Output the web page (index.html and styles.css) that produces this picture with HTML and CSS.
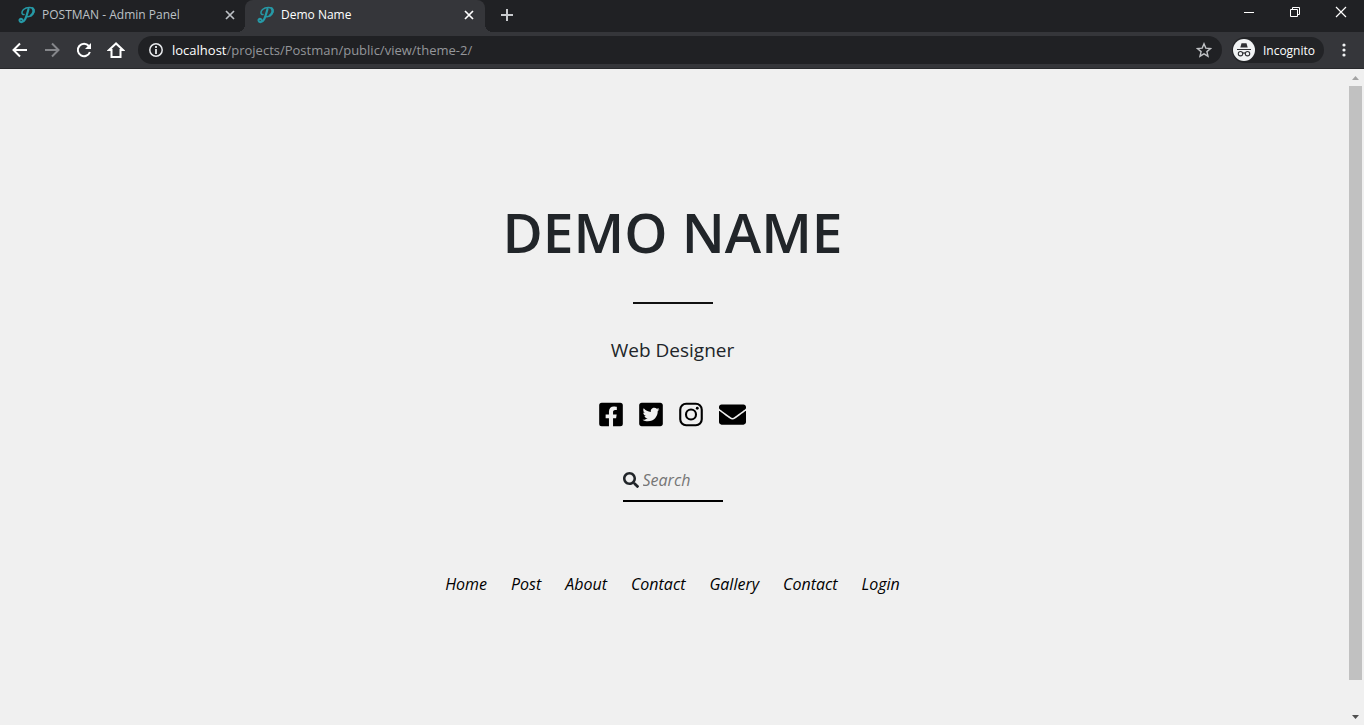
FILE: index.html
```html
<!DOCTYPE html>
<html lang="en">
<head>
<meta charset="utf-8">
<title>Demo Name</title>
<link rel="stylesheet" href="styles.css">
</head>
<body>
<svg class="defs" aria-hidden="true">
  <symbol id="logo" viewBox="0 0 18 18">
    <g fill="none" stroke="#2699a6" stroke-linecap="round">
      <path stroke-width="2.2" d="M10.500 3C9.500 6.500 8.500 11 7 13.500C5.300 16.500 2.200 16.800 1.600 14.800C1.200 13 3 12.300 4.200 13.500"/>
      <path stroke-width="1.500" d="M6 8.500C3.500 8.800 3.200 5.800 5.500 3.500C8.500 1 14.500 .6 16 3.500C17 6.500 14 11 9.500 10.700"/>
      <path stroke-width="2.200" d="M14.600 2.500C16.300 4.500 15.300 7.500 13 9.300"/>
    </g>
  </symbol>
  <symbol id="close" viewBox="0 0 10 10"><path d="M1 1l8 8M9 1l-8 8" fill="none" stroke="currentColor" stroke-width="1.700"/></symbol>
</svg>

<header class="browser">
  <div class="tabstrip">
    <div class="tab">
      <svg class="favicon"><use href="#logo"/></svg>
      <span class="tab-title">POSTMAN - Admin Panel</span>
      <button class="tab-close" aria-label="Close POSTMAN - Admin Panel"><svg width="10" height="10"><use href="#close"/></svg></button>
    </div>
    <div class="tab tab-active">
      <svg class="favicon"><use href="#logo"/></svg>
      <span class="tab-title">Demo Name</span>
      <button class="tab-close" aria-label="Close Demo Name"><svg width="10" height="10"><use href="#close"/></svg></button>
    </div>
    <button class="new-tab" aria-label="New tab"><svg width="12" height="12" viewBox="0 0 12 12"><path d="M6 0v12M0 6h12" stroke="#c8cacd" stroke-width="2"/></svg></button>
    <div class="window-controls">
      <button aria-label="Minimize"><svg width="12" height="12" viewBox="0 0 12 12"><path d="M1 6.500h10" stroke="#fff"/></svg></button>
      <button aria-label="Restore"><svg width="12" height="12" viewBox="0 0 12 12"><path d="M1.500 3.500h7v7h-7zM3.500 3.500v-2h7v7h-2" fill="none" stroke="#fff"/></svg></button>
      <button aria-label="Close window"><svg width="12" height="12" viewBox="0 0 12 12"><path d="M1 1l10 10M11 1L1 11" stroke="#fff" stroke-width="1.200"/></svg></button>
    </div>
  </div>
  <div class="toolbar">
    <nav class="nav-buttons" aria-label="Browser navigation">
      <button aria-label="Back"><svg width="16" height="16" viewBox="0 0 16 16"><path d="M15 8H2M8 1.500L1.500 8 8 14.500" fill="none" stroke="#fff" stroke-width="2"/></svg></button>
      <button aria-label="Forward"><svg width="16" height="16" viewBox="0 0 16 16"><path d="M1 8h13M8 1.500L14.500 8 8 14.500" fill="none" stroke="#85868a" stroke-width="2"/></svg></button>
      <button aria-label="Reload"><svg width="16" height="16" viewBox="0 0 16 16"><path d="M13.900 10A6.200 6.200 0 1 1 12.800 4" fill="none" stroke="#fff" stroke-width="2"/><path d="M15 1v6H9z" fill="#fff"/></svg></button>
      <button aria-label="Home"><svg width="18" height="16" viewBox="0 0 18 16"><path d="M9 1.400L2 8h2.500v7h9V8H16z" fill="none" stroke="#fff" stroke-width="2"/></svg></button>
    </nav>
    <div class="omnibox">
      <button aria-label="View site information"><svg width="14" height="14" viewBox="0 0 14 14"><circle cx="7" cy="7" r="6.200" fill="none" stroke="#e8eaed" stroke-width="1.500"/><path d="M7 3v2M7 6v5" stroke="#e8eaed" stroke-width="1.800"/></svg></button>
      <a class="url" href="#"><span class="host">localhost</span>/projects/Postman/public/view/theme-2/</a>
      <button aria-label="Bookmark this page"><svg width="16" height="16" viewBox="0 0 16 16"><path d="M8 1.800l1.800 4.300 4.700.4-3.600 3.100 1.100 4.600L8 11.800l-4 2.400 1.100-4.600L1.500 6.500l4.700-.4z" fill="none" stroke="#c1c3c6" stroke-width="1.400"/></svg></button>
    </div>
    <button class="incognito">
      <svg width="22" height="22" viewBox="0 0 22 22"><circle cx="11" cy="11" r="11" fill="#f1f3f4"/><path d="M7.300 8.500L8.500 4.300h5l1.200 4.200z" fill="#303135"/><path d="M4 10.500h14M9.800 14.300q1.200-.8 2.400 0" fill="none" stroke="#303135" stroke-width="1.200"/><circle cx="7.500" cy="14.700" r="2.200" fill="none" stroke="#303135" stroke-width="1.100"/><circle cx="14.500" cy="14.700" r="2.200" fill="none" stroke="#303135" stroke-width="1.100"/></svg>
      <span>Incognito</span>
    </button>
    <button class="menu" aria-label="Menu"><svg width="4" height="14" viewBox="0 0 4 14"><circle cx="2" cy="2" r="1.600" fill="#f1f3f4"/><circle cx="2" cy="7" r="1.600" fill="#f1f3f4"/><circle cx="2" cy="12" r="1.600" fill="#f1f3f4"/></svg></button>
  </div>
</header>

<div class="viewport">
  <main class="page">
    <h1 class="name">DEMO NAME</h1>
    <hr class="divider">
    <p class="role">Web Designer</p>
    <div class="social">
      <a href="#" aria-label="Facebook"><svg width="24" height="27" viewBox="0 0 448 512"><path d="M400 32H48A48 48 0 0 0 0 80v352a48 48 0 0 0 48 48h137.250V327.690h-63V256h63v-54.640c0-62.150 37-96.480 93.670-96.480 27.140 0 55.520 4.840 55.520 4.840v61h-31.270c-30.810 0-40.420 19.120-40.420 38.730V256h68.780l-11 71.690h-57.780V480H400a48 48 0 0 0 48-48V80a48 48 0 0 0-48-48z"/></svg></a>
      <a href="#" aria-label="Twitter"><svg width="24" height="27" viewBox="0 0 448 512"><path d="M400 32H48C21.500 32 0 53.500 0 80v352c0 26.500 21.500 48 48 48h352c26.500 0 48-21.500 48-48V80c0-26.500-21.500-48-48-48zm-48.900 158.800c.2 2.800.2 5.700.2 8.500 0 86.700-66 186.600-186.600 186.600-37.200 0-71.700-10.800-100.700-29.400 5.300.6 10.400.8 15.800.8 30.700 0 58.900-10.400 81.400-28-28.800-.6-53-19.500-61.300-45.500 10.100 1.500 19.200 1.500 29.600-1.200-30-6.100-52.500-32.500-52.500-64.400v-.8c8.700 4.900 18.900 7.900 29.600 8.300a65.447 65.447 0 0 1-29.200-54.600c0-12.200 3.200-23.400 8.900-33.100 32.300 39.800 80.800 65.800 135.200 68.600-9.300-44.500 24-80.600 64-80.600 18.900 0 35.900 7.900 47.900 20.700 14.800-2.800 29-8.300 41.600-15.800-4.900 15.200-15.200 28-28.800 36.100 13.200-1.400 26-5.100 37.800-10.200-8.900 13.100-20.100 24.700-32.900 34z"/></svg></a>
      <a href="#" aria-label="Instagram"><svg width="24" height="27" viewBox="0 0 448 512"><rect x="20" y="52" width="408" height="408" rx="112" fill="none" stroke="#000" stroke-width="40"/><circle cx="224" cy="256" r="95" fill="none" stroke="#000" stroke-width="40"/><circle cx="343" cy="137" r="27"/></svg></a>
      <a href="#" aria-label="Email"><svg width="27" height="27" viewBox="0 0 512 512"><path d="M502.300 190.800c3.900-3.100 9.700-.2 9.700 4.700V400c0 26.500-21.500 48-48 48H48c-26.500 0-48-21.500-48-48V195.600c0-5 5.700-7.800 9.700-4.700 22.400 17.400 52.100 39.500 154.100 113.600 21.100 15.400 56.700 47.800 92.200 47.600 35.700.3 72-32.800 92.300-47.600 102-74.100 131.600-96.300 154-113.700zM256 320c23.200.4 56.600-29.200 73.400-41.400 132.700-96.300 142.800-104.700 173.400-128.700 5.800-4.500 9.200-11.500 9.200-18.900v-19c0-26.500-21.500-48-48-48H48c-26.500 0-48 21.500-48 48v19c0 7.400 3.400 14.300 9.200 18.900 30.600 23.900 40.700 32.400 173.400 128.700 16.800 12.200 50.200 41.800 73.400 41.400z"/></svg></a>
    </div>
    <form class="search">
      <label for="q" aria-label="Search"><svg width="16" height="16" viewBox="0 0 512 512"><path fill="#212529" d="M505 442.700L405.300 343c-4.500-4.500-10.600-7-17-7H372c27.600-35.300 44-79.700 44-128C416 93.100 322.900 0 208 0S0 93.100 0 208s93.100 208 208 208c48.300 0 92.700-16.400 128-44v16.300c0 6.400 2.500 12.500 7 17l99.700 99.700c9.400 9.400 24.600 9.400 33.900 0l28.300-28.300c9.400-9.400 9.400-24.600.1-34zM208 336c-70.700 0-128-57.200-128-128 0-70.700 57.200-128 128-128 70.700 0 128 57.200 128 128 0 70.700-57.200 128-128 128z"/></svg></label>
      <input id="q" type="text" placeholder="Search">
    </form>
    <nav class="links" aria-label="Site">
      <a href="#">Home</a>
      <a href="#">Post</a>
      <a href="#">About</a>
      <a href="#">Contact</a>
      <a href="#">Gallery</a>
      <a href="#">Contact</a>
      <a href="#">Login</a>
    </nav>
  </main>
  <div class="scrollbar" aria-hidden="true">
    <svg width="7" height="4" viewBox="0 0 7 4"><path d="M0 4L3.500 0 7 4z" fill="#a3a3a3"/></svg>
    <div class="thumb"></div>
    <svg width="7" height="4" viewBox="0 0 7 4"><path d="M0 0h7L3.500 4z" fill="#505050"/></svg>
  </div>
</div>
</body>
</html>
```
FILE: styles.css
```css
* {
  box-sizing: border-box;
}

body {
  display: flex;
  flex-direction: column;
  min-height: 100vh;
  margin: 0;
  background: #f0f0f0;
  color: #212529;
  font-family: "Open Sans", "Noto Sans", sans-serif;
}

.defs {
  position: absolute;
  width: 0;
  height: 0;
}

svg {
  display: block;
  flex: none;
}

button {
  display: flex;
  align-items: center;
  justify-content: center;
  padding: 0;
  border: 0;
  background: none;
  color: inherit;
  font: inherit;
}

a {
  color: inherit;
  text-decoration: none;
}

/* Browser frame */
.browser {
  border-bottom: 1px solid #28292c;
  background: #35363a;
  color: #fff;
  font-size: 12px;
}

.tabstrip {
  display: flex;
  height: 32px;
  padding-left: 6px;
  background: #202124;
}

.tab {
  display: flex;
  align-items: center;
  width: 239px;
  height: 32px;
  padding: 0 9px 2px 12px;
  color: #bdc1c6;
}

.tab-active {
  position: relative;
  width: 240px;
  padding-right: 10px;
  border-radius: 8px 8px 0 0;
  background: #35363a;
  color: #fff;
}

.tab-active::before,
.tab-active::after {
  content: "";
  position: absolute;
  bottom: 0;
  width: 8px;
  height: 8px;
}

.tab-active::before {
  right: 100%;
  background: radial-gradient(circle at 0 0, #202124 8px, #35363a 8px);
}

.tab-active::after {
  left: 100%;
  background: radial-gradient(circle at 100% 0, #202124 8px, #35363a 8px);
}

.favicon {
  width: 18px;
  height: 18px;
}

.tab-title {
  flex: 1;
  padding: 0 0 2px 6px;
  white-space: nowrap;
}

.tab-close {
  width: 12px;
  height: 16px;
}

.new-tab {
  width: 28px;
  height: 30px;
  margin-left: 8px;
}

.window-controls {
  display: flex;
  margin-left: auto;
}

.window-controls button {
  width: 46px;
  height: 24px;
}

.toolbar {
  display: flex;
  align-items: center;
  height: 36px;
}

.nav-buttons {
  display: flex;
  padding: 0 6px 0 4px;
}

.nav-buttons button {
  width: 32px;
  height: 28px;
}

.omnibox {
  display: flex;
  flex: 1;
  align-items: center;
  height: 28px;
  padding: 0 10px;
  border-radius: 14px;
  background: #202124;
  font-size: 13px;
}

.omnibox button {
  width: 16px;
}

.url {
  flex: 1;
  padding-left: 8px;
  color: #94969a;
}

.host {
  color: #fff;
}

.incognito {
  gap: 8px;
  height: 26px;
  margin-left: 10px;
  padding: 0 9px 0 1px;
  border-radius: 13px;
  background: #222326;
}

.menu {
  width: 40px;
  height: 28px;
}

/* Page */
.viewport {
  display: flex;
  flex: 1;
}

.page {
  display: flex;
  flex: 1;
  flex-direction: column;
  align-items: center;
  padding: 123px 2px 0 0;
}

.name {
  margin: 0;
  font-size: 55px;
  font-weight: 600;
  line-height: 80px;
}

.divider {
  width: 80px;
  height: 2px;
  margin: 30px 0 32px;
  border: 0;
  background: #111;
}

.role {
  margin: 0;
  font-size: 19px;
  line-height: 28px;
}

.social {
  display: flex;
  gap: 16px;
  margin-top: 37px;
}

.search {
  display: flex;
  align-items: center;
  gap: 4px;
  width: 100px;
  height: 42px;
  margin-top: 32px;
  border-bottom: 2px solid #000;
}

.search input {
  flex: 1;
  min-width: 0;
  padding: 0;
  border: 0;
  outline: 0;
  background: none;
  font: italic 16px "Open Sans", "Noto Sans", sans-serif;
}

.search input::placeholder {
  color: #757575;
}

.links {
  display: flex;
  gap: 24px;
  margin-top: 70px;
  color: #000;
  font-size: 16px;
  font-style: italic;
  line-height: 24px;
}

.scrollbar {
  display: flex;
  flex-direction: column;
  align-items: center;
  width: 17px;
  padding: 7px 0 6px;
}

.thumb {
  flex: 1;
  width: 13px;
  margin: 6px 0 35px;
  background: #c1c1c1;
}
```
